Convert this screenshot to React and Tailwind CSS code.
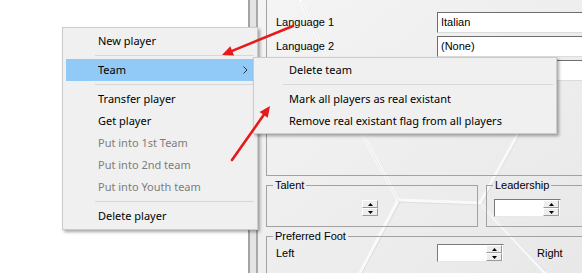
import React from 'react';

const mainItems = [
  { label: 'New player' },
  { sep: true },
  { label: 'Team', active: true, sub: true },
  { sep: true },
  { label: 'Transfer player' },
  { label: 'Get player' },
  { label: 'Put into 1st Team', disabled: true },
  { label: 'Put into 2nd team', disabled: true },
  { label: 'Put into Youth team', disabled: true },
  { sep: true },
  { label: 'Delete player' },
];

const teamItems = [
  { label: 'Delete team' },
  { sep: true },
  { label: 'Mark all players as real existant' },
  { label: 'Remove real existant flag from all players' },
];

const menuFont = { fontFamily: '"Noto Sans", "Open Sans", sans-serif' };
const formFont = { fontFamily: '"Liberation Sans", Arial, sans-serif' };

const MenuRows = ({ items, sepIndent }) =>
  items.map((item, i) => {
    if (item.sep) {
      return (
        <div key={i} className="h-[7px] flex items-center">
          <div className={`h-px flex-1 bg-[#d7d7d7] ${sepIndent}`} />
        </div>
      );
    }
    return (
      <div
        key={i}
        className={`h-[22px] flex items-center justify-between pl-[32px] pr-[6px] ${
          item.active ? 'bg-[#91c9f7]' : ''
        } ${item.disabled ? 'text-[#7d7d7d]' : 'text-black'}`}
      >
        <span>{item.label}</span>
        {item.sub && (
          <svg width="5" height="8" viewBox="0 0 5 8">
            <path d="M0.5 0.5 L4 4 L0.5 7.5" fill="none" stroke="#333" strokeWidth="1" />
          </svg>
        )}
      </div>
    );
  });

const SpinButtons = () => (
  <div className="flex flex-col w-[16px] shrink-0">
    <div className="h-[8px] bg-[#eeeeee] border border-t-white border-l-white border-b-[#9a9a9a] border-r-[#9a9a9a] flex items-center justify-center">
      <svg width="5" height="3" viewBox="0 0 5 3">
        <path d="M2.5 0 L5 3 L0 3 Z" fill="#000" />
      </svg>
    </div>
    <div className="h-[8px] bg-[#eeeeee] border border-t-white border-l-white border-b-[#9a9a9a] border-r-[#9a9a9a] flex items-center justify-center">
      <svg width="5" height="3" viewBox="0 0 5 3">
        <path d="M0 0 L5 0 L2.5 3 Z" fill="#000" />
      </svg>
    </div>
  </div>
);

const SpinEdit = () => (
  <div className="w-[67px] h-[18px] shrink-0 bg-white border border-t-[#7a7a7a] border-l-[#7a7a7a] border-b-[#e8e8e8] border-r-[#e8e8e8] flex justify-end items-center pr-px">
    <SpinButtons />
  </div>
);

const TextBox = ({ value }) => (
  <div className="w-[200px] h-[21px] shrink-0 bg-white border border-t-[#6e6e6e] border-l-[#6e6e6e] border-b-[#dcdcdc] border-r-[#dcdcdc] flex items-center pl-[3px] text-[11px] text-black">
    {value}
  </div>
);

const Arrow = ({ x1, y1, x2, y2 }) => {
  const dx = x2 - x1;
  const dy = y2 - y1;
  const len = Math.hypot(dx, dy);
  const ux = dx / len;
  const uy = dy / len;
  const bx = x2 - ux * 11;
  const by = y2 - uy * 11;
  const nx = -uy * 5;
  const ny = ux * 5;
  return (
    <g>
      <line x1={x1} y1={y1} x2={bx} y2={by} stroke="#e51b1b" strokeWidth="2.6" strokeLinecap="round" />
      <polygon points={`${x2},${y2} ${bx + nx},${by + ny} ${bx - nx},${by - ny}`} fill="#e51b1b" />
    </g>
  );
};

export default function App() {
  return (
    <div className="relative w-[582px] h-[273px] overflow-hidden flex bg-white">
      <div className="w-[248px] shrink-0 bg-white" />
      <div className="w-[2px] shrink-0 bg-[#a3a3a3]" />
      <div className="w-[6px] shrink-0 bg-[#e4e4e4]" />
      <div className="w-[2px] shrink-0 bg-[#a9a9a9]" />

      {/* form panel */}
      <div className="relative flex-1 overflow-hidden bg-linear-to-br from-[#f4f4f4] via-[#eeeeee] to-[#e8e8e8]" style={formFont}>
        <svg className="absolute inset-0" width="324" height="273" viewBox="258 0 324 273">
          <g fill="none" strokeLinecap="round">
            <path d="M300 0 L360 130 L398 200 L480 203 L520 130 L560 40" stroke="#ffffff" strokeOpacity="0.7" strokeWidth="3" />
            <path d="M398 200 L360 273 M480 203 L545 273" stroke="#ffffff" strokeOpacity="0.7" strokeWidth="3" />
            <path d="M301 2 L361 132 L399 202 L481 205 L521 132 L561 42" stroke="#d2d2d2" strokeOpacity="0.5" strokeWidth="1" />
            <path d="M400 202 L362 273 M482 205 L545 271" stroke="#cfcfcf" strokeOpacity="0.6" strokeWidth="1" />
          </g>
        </svg>

        <div className="relative pl-[8px] text-[11px] leading-[13px] text-black">
          <div className="-mt-[10px] w-[330px] h-[186px] border border-[#a2a2a2] pt-[21px] pl-[9px] flex flex-col gap-[3px]">
            <div className="flex items-center h-[21px]">
              <span className="w-[161px] shrink-0">Language 1</span>
              <TextBox value="Italian" />
            </div>
            <div className="flex items-center h-[21px]">
              <span className="w-[161px] shrink-0">Language 2</span>
              <TextBox value="(None)" />
            </div>
            <div className="flex items-center h-[21px]">
              <span className="w-[161px] shrink-0" />
              <TextBox value="" />
            </div>
          </div>

          <div className="flex gap-[8px] mt-[3px]">
            <fieldset className="w-[212px] h-[48px] shrink-0 border border-[#a2a2a2] px-[6px]">
              <legend className="px-[2px] leading-[13px]">Talent</legend>
              <div className="ml-[89px] mt-[8px]">
                <SpinButtons />
              </div>
            </fieldset>
            <fieldset className="w-[120px] h-[48px] shrink-0 border border-[#a2a2a2] px-[6px]">
              <legend className="px-[2px] leading-[13px]">Leadership</legend>
              <div className="ml-[1px] mt-[7px]">
                <SpinEdit />
              </div>
            </fieldset>
          </div>

          <fieldset className="mt-[3px] w-[330px] h-[60px] border border-[#a2a2a2] px-[6px]">
            <legend className="px-[2px] leading-[13px]">Preferred Foot</legend>
            <div className="flex items-center h-[16px] mt-[2px] pl-[3px]">
              <span className="w-[161px] shrink-0">Left</span>
              <SpinEdit />
              <span className="ml-[33px] shrink-0">Right</span>
            </div>
          </fieldset>
        </div>
      </div>

      {/* context menu */}
      <div
        className="absolute left-[62px] top-[27px] w-[196px] bg-[#f0f0f0] border border-[#cccccc] px-[3px] py-[2px] text-[11px] shadow-[2px_2px_3px_rgba(0,0,0,0.35)]"
        style={menuFont}
      >
        <MenuRows items={mainItems} sepIndent="ml-[29px]" />
      </div>

      {/* team submenu */}
      <div
        className="absolute left-[253px] top-[57px] w-[304px] bg-[#f0f0f0] border border-[#cccccc] px-[3px] py-px text-[11px] shadow-[2px_2px_3px_rgba(0,0,0,0.35)]"
        style={menuFont}
      >
        <MenuRows items={teamItems} sepIndent="ml-[26px]" />
      </div>

      <svg className="absolute inset-0 pointer-events-none" width="582" height="273">
        <Arrow x1={293} y1={26} x2={222} y2={55} />
        <Arrow x1={232} y1={160} x2={270} y2={106} />
      </svg>
    </div>
  );
}
